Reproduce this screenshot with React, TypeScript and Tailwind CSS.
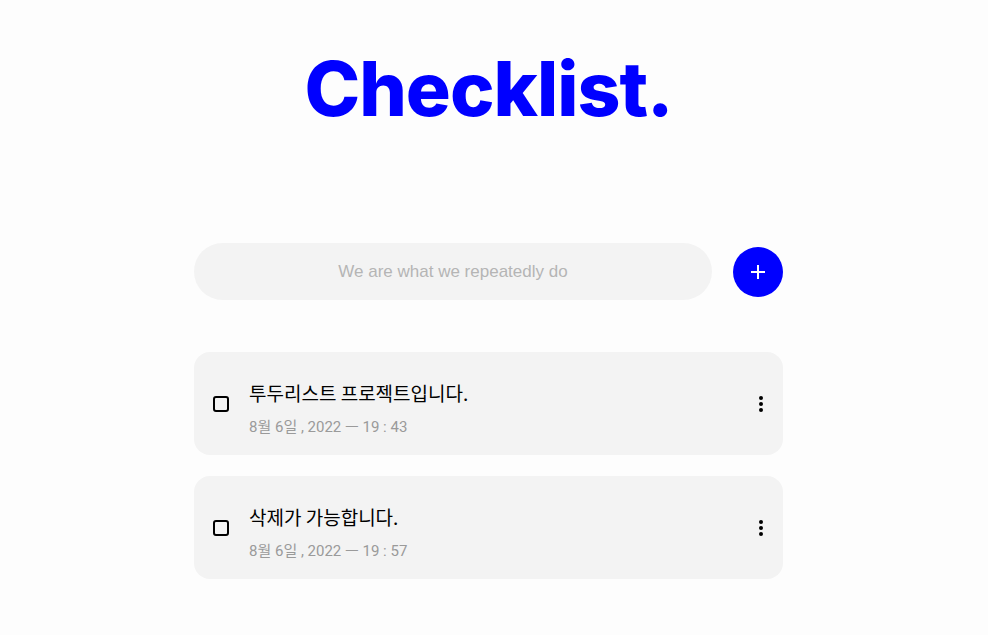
const todos = [
  { id: 1, text: "투두리스트 프로젝트입니다.", date: "8월 6일 , 2022 ㅡ 19 : 43" },
  { id: 2, text: "삭제가 가능합니다.", date: "8월 6일 , 2022 ㅡ 19 : 57" },
];

function Kebab() {
  return (
    <div className="flex flex-col items-center gap-[2px]">
      <span className="h-[4px] w-[4px] rounded-full bg-black" />
      <span className="h-[4px] w-[4px] rounded-full bg-black" />
      <span className="h-[4px] w-[4px] rounded-full bg-black" />
    </div>
  );
}

function TodoItem({ text, date }: { text: string; date: string }) {
  return (
    <li className="flex h-[103px] items-center rounded-2xl bg-[#f3f3f3] pl-[19px] pr-[20px]">
      <span className="h-[16px] w-[16px] shrink-0 rounded-[3px] border-2 border-black" />
      <div className="ml-[20px] flex flex-1 flex-col pt-[10px]">
        <span className="text-[19px] leading-[24px] text-black">{text}</span>
        <span className="mt-[13px] font-['Roboto','Noto_Sans_CJK_KR',sans-serif] text-[15px] leading-[18px] text-[#9a9a9a]">
          {date}
        </span>
      </div>
      <Kebab />
    </li>
  );
}

export default function App() {
  return (
    <div className="min-h-[635px] w-full bg-[#fdfdfd] font-['Noto_Sans_CJK_KR',sans-serif]">
      <div className="w-[977px]">
        <div className="mx-auto w-[589px] pt-[41px]">
          <h1 className="text-center font-['Inter',sans-serif] text-[75px] font-extrabold leading-[96px] tracking-[-1px] text-[#0000ff]">
            Checklist.
          </h1>
          <div className="mt-[106px] flex items-center justify-between">
            <div className="flex h-[57px] w-[518px] items-center justify-center rounded-full bg-[#f3f3f3]">
              <span className="font-['Liberation_Sans',sans-serif] text-[17px] text-[#b5b5b5]">
                We are what we repeatedly do
              </span>
            </div>
            <button className="flex h-[50px] w-[50px] items-center justify-center rounded-full bg-[#0000ff]">
              <svg width="18" height="18" viewBox="0 0 18 18" fill="none">
                <path d="M9 2v14M2 9h14" stroke="white" strokeWidth="2" />
              </svg>
            </button>
          </div>
          <ul className="mt-[52px] flex flex-col gap-[21px]">
            {todos.map((t) => (
              <TodoItem key={t.id} text={t.text} date={t.date} />
            ))}
          </ul>
        </div>
      </div>
    </div>
  );
}
